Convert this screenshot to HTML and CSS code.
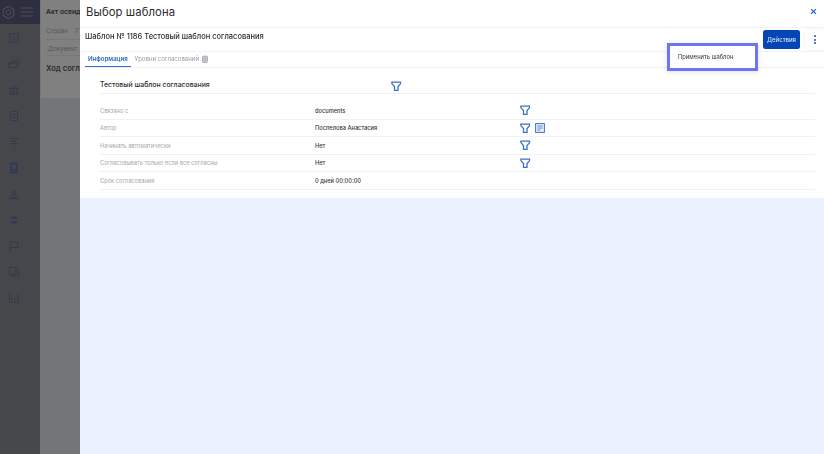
FILE: index.html
```html
<!DOCTYPE html>
<html lang="ru">
<head>
<meta charset="utf-8">
<title>Выбор шаблона</title>
<link rel="stylesheet" href="styles.css">
</head>
<body>
<svg class="defs" width="0" height="0" aria-hidden="true">
  <symbol id="funnel" viewBox="0 0 12 12"><path d="M1 1.300h10v1.700L8 6.400v4.300H4V6.400L1 3z" fill="none" stroke="currentColor" stroke-width="1.500" stroke-linejoin="miter"/></symbol>
</svg>
<div class="app">
  <aside class="rail">
    <div class="rail-top">
      <svg class="logo" viewBox="0 0 16 16"><path d="M8 1.500l5.600 3.200v6.600L8 14.500l-5.600-3.200V4.700z" fill="none" stroke="#4c4f60" stroke-width="1.100"/><circle cx="8" cy="8" r="2.600" fill="none" stroke="#4c4f60" stroke-width="1"/></svg>
      <svg class="burger" viewBox="0 0 12 12"><path d="M0 2h12M0 6h12M0 10h12" stroke="#4c4f60" stroke-width="1"/></svg>
    </div>
    <nav class="rail-icons">
      <svg viewBox="0 0 12 12"><rect x="1.500" y="1.500" width="9" height="9"/><path d="M6 3.500v5M4.500 7L6 8.500 7.500 7"/></svg>
      <svg viewBox="0 0 12 12"><path d="M1 5h7.500v4.500H1zM3.500 5V3H11v4.500H8.500"/></svg>
      <svg viewBox="0 0 12 12"><path d="M1.500 4.500L6 2l4.500 2.500zM3 5.500v3.500M6 5.500v3.500M9 5.500v3.500M1.500 10h9"/></svg>
      <svg viewBox="0 0 12 12"><path d="M2.500 1.500h7v9h-7zM4.500 4.500h3M4.500 7.500h3"/></svg>
      <svg viewBox="0 0 12 12"><path d="M1.500 2.500h9M4 5h4M3 7.500h6M5 10h2"/></svg>
      <svg viewBox="0 0 12 12"><path class="solid" d="M2.500 1h7v10h-7z"/><path class="cut" d="M4 4h4M4 6h4"/></svg>
      <svg viewBox="0 0 12 12"><path d="M6 1.500L3 9.500h6zM1 10.500h10M4 7h4"/></svg>
      <svg viewBox="0 0 12 12"><ellipse cx="6" cy="6" rx="3.700" ry="3.700"/><path class="cut" d="M2.500 6h7"/></svg>
      <svg viewBox="0 0 12 12"><path d="M2.500 11V2h7.500v5.500H2.500"/></svg>
      <svg viewBox="0 0 12 12"><path d="M1.500 1.500h6.500v7H1.500zM8 3.500h2.500v7h-6.500V8.500"/></svg>
      <svg viewBox="0 0 12 12"><path d="M1.500 1.500v9h9M4 9V5M7 9V6.500M10 9V2"/></svg>
    </nav>
  </aside>
  <div class="backdrop-page">
    <div class="bp-card">
      <div class="bp-title">Акт освид</div>
      <div class="bp-row"><span>Создан</span><span>Г</span></div>
      <div class="bp-row bp-tabs">Документ</div>
      <div class="bp-heading">Ход согл</div>
    </div>
  </div>
  <main class="drawer">
    <header class="drawer-head">
      <h1>Выбор шаблона</h1>
      <svg class="close" viewBox="0 0 10 10"><path d="M1.500 1.500l7 7M8.500 1.500l-7 7"/></svg>
    </header>
    <section class="panel">
      <div class="panel-head">
        <h2>Шаблон № 1186 Тестовый шаблон согласования</h2>
        <div class="actions">
          <button class="btn">Действия</button>
          <div class="more"><i></i><i></i><i></i></div>
        </div>
      </div>
      <div class="tabs">
        <span class="tab active">Информация</span>
        <span class="tab">Уровни согласований</span>
        <svg class="trash" viewBox="0 0 8 10"><rect x="0.700" y="0.700" width="6.600" height="8.600" rx="1.200"/><path d="M2.500 3.500h3M2.500 6.500h3"/></svg>
      </div>
      <div class="info">
        <div class="info-title">
          <h3>Тестовый шаблон согласования</h3>
          <svg class="fn"><use href="#funnel"/></svg>
        </div>
        <div class="row"><span class="k">Связано с</span><span class="v">documents</span><span class="ic"><svg class="fn"><use href="#funnel"/></svg></span></div>
        <div class="row"><span class="k">Автор</span><span class="v">Поспелова Анастасия</span><span class="ic"><svg class="fn"><use href="#funnel"/></svg><svg class="doc" viewBox="0 0 10 10"><rect x="0.600" y="0.600" width="8.800" height="8.800"/><path d="M2.300 3h5.400M2.300 5h5.400M2.300 7h3"/></svg></span></div>
        <div class="row"><span class="k">Начинать автоматически</span><span class="v">Нет</span><span class="ic"><svg class="fn"><use href="#funnel"/></svg></span></div>
        <div class="row"><span class="k">Согласовывать только если все согласны</span><span class="v">Нет</span><span class="ic"><svg class="fn"><use href="#funnel"/></svg></span></div>
        <div class="row"><span class="k">Срок согласования</span><span class="v">0 дней 00:00:00</span><span class="ic"></span></div>
      </div>
    </section>
    <div class="menu">Применить шаблон</div>
  </main>
</div>
</body>
</html>
```
FILE: styles.css
```css
* { box-sizing: border-box; }
html, body { margin: 0; height: 100%; overflow: hidden; }
body { font-family: Inter, "Liberation Sans", sans-serif; color: #25272c; background: #747577; }
.defs { position: absolute; }
.app { display: flex; width: 824px; height: 454px; position: relative; filter: blur(0.45px); }

.rail { width: 40px; flex: none; background: #45474b; display: flex; flex-direction: column; }
.rail-top { height: 24px; background: #2d2f3f; display: flex; align-items: center; padding-left: 1px; overflow: hidden; flex: none; }
.logo { width: 15px; height: 15px; flex: none; }
.burger { width: 12px; height: 12px; flex: none; margin-left: 5px; }
.rail-icons { display: flex; flex-direction: column; align-items: center; gap: 14px; padding: 8px 12px 0 0; }
.rail-icons svg { width: 12px; height: 12px; flex: none; }
.rail-icons path, .rail-icons rect { fill: none; stroke: #363a4e; stroke-width: 1; }
.rail-icons path.solid, .rail-icons ellipse { fill: #363a4e; }
.rail-icons path.cut { stroke: #5a5c63; stroke-width: .7; }

.backdrop-page { width: 40px; flex: none; background: #747577; overflow: hidden; }
.bp-card { height: 98px; background: #808080; padding-left: 5px; border-left: 1px solid #77787a; }
.bp-title { height: 24px; font-size: 6.800px; font-weight: 600; line-height: 23px; color: #27282a; white-space: nowrap; }
.bp-row { height: 16px; display: flex; gap: 8px; font-size: 6px; line-height: 11px; padding-top: 1px; color: #555; border-bottom: 1px solid #777; overflow: hidden; }
.bp-tabs { padding: 0 0 0 2px; line-height: 17px; }
.bp-heading { font-size: 7.600px; font-weight: 600; color: #2d2e30; margin-top: 6px; white-space: nowrap; line-height: 14px; }

.drawer { flex: 1; background: #ecf2fd; position: relative; min-width: 0; }
.drawer-head { height: 27px; background: #fff; display: flex; align-items: center; justify-content: space-between; padding: 0 7px 4px 6px; }
.drawer-head h1 { margin: 0; font-size: 11.300px; font-weight: 400; color: #2a2c30; letter-spacing: 0.100px; }
.close { width: 7px; height: 7px; }
.close path { stroke: #1565c0; stroke-width: 1.700; fill: none; }

.panel { background: #fff; height: 171px; border-top: 1px solid #f1f2f4; }
.panel-head { height: 24px; display: flex; align-items: center; justify-content: space-between; padding-left: 5px; border-bottom: 1px solid #f1f2f4; }
.panel-head h2 { margin: 0 0 7px; font-size: 7.500px; font-weight: 500; color: #2c2e33; }
.actions { display: flex; align-items: center; gap: 5px; height: 21px; }
.btn { width: 37px; height: 19px; border: 0; border-radius: 2.500px; background: #0546b5; color: #cfe0fa; font: 500 6px Inter, "Liberation Sans", sans-serif; padding: 0; }
.more { width: 19px; height: 19px; display: flex; flex-direction: column; align-items: center; justify-content: center; gap: 1.500px; background: #fff; box-shadow: 0 0 3px rgba(30,50,90,.08); }
.more i { width: 2px; height: 2px; border-radius: 50%; background: #1e4f9c; display: block; }

.tabs { height: 16px; display: flex; align-items: center; border-bottom: 1px solid #eff0f3; padding-left: 5px; }
.tab { font-size: 6.050px; color: #9a9ea6; height: 15px; line-height: 14px; padding: 0 3px; white-space: nowrap; }
.tab.active { color: #2a6fbf; font-weight: 600; border-bottom: 1px solid #2a72c4; margin-right: 1px; }
.trash { width: 6px; height: 8.500px; margin-bottom: 1px; }
.trash rect { fill: #c9ccd1; stroke: #8d9097; stroke-width: .8; }
.trash path { stroke: #8d9097; stroke-width: .7; }

.info { padding: 0 9px 0 20px; }
.info-title { height: 26px; display: flex; align-items: flex-end; padding-bottom: 2px; border-bottom: 1px solid #f0f1f3; margin-bottom: 8px; }
.info-title h3 { margin: 0 0 1px; width: 291px; font-size: 6.900px; font-weight: 500; color: #2c2e33; line-height: 10px; }
.row { height: 17.500px; display: flex; align-items: center; border-bottom: 1px solid #f0f1f3; }
.k { width: 215px; font-size: 5.700px; color: #a5a8ae; white-space: nowrap; }
.v { width: 205px; font-size: 5.700px; color: #34363a; font-weight: 500; white-space: nowrap; }
.ic { display: flex; align-items: center; gap: 4px; }
.fn { width: 10.500px; height: 10.500px; color: #3d73c2; flex: none; display: block; }
.doc { width: 10px; height: 10px; }
.doc rect { fill: #eaf0fa; stroke: #3d73c2; stroke-width: 1; }
.doc path { stroke: #3d73c2; stroke-width: .8; }

.menu { position: absolute; left: 587px; top: 43px; width: 91px; height: 28px; background: #fff; border: 3px solid #6f74f5; padding-left: 8px; font-size: 5.800px; line-height: 22px; color: #33353a; box-shadow: 0 1px 5px rgba(40,50,90,.15); }
```
